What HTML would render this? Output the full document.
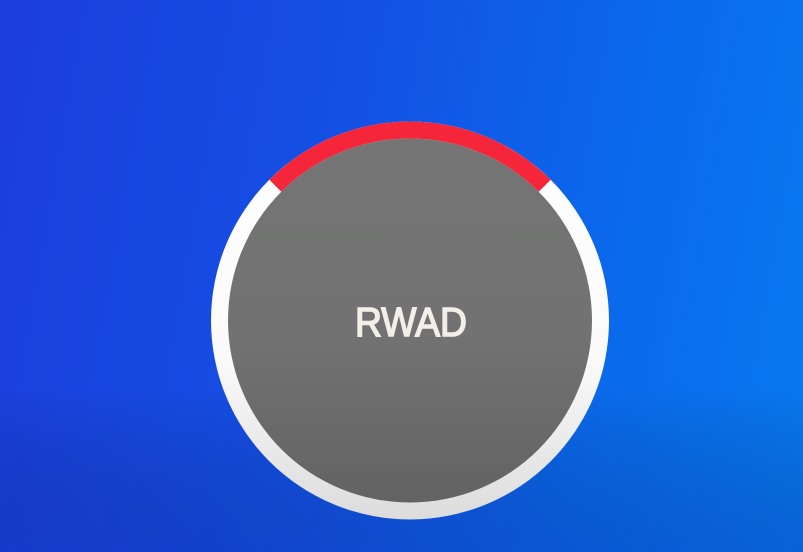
<!DOCTYPE html>
<html><head><meta charset="utf-8"><style>
html,body{margin:0;padding:0;width:803px;height:552px;overflow:hidden}
body{background:linear-gradient(100deg,#1c3ddc 0%,#1450e4 40%,#0a6aec 75%,#0879f0 100%)}
svg{position:absolute;left:0;top:0}
</style></head><body>
<svg width="803" height="552" viewBox="0 0 803 552">
<defs>
<linearGradient id="bg2" x1="0" y1="0" x2="0" y2="1">
<stop offset="0.7" stop-color="#000" stop-opacity="0"/>
<stop offset="1" stop-color="#0a1f8a" stop-opacity="0.25"/>
</linearGradient>
<linearGradient id="ring" x1="0" y1="0" x2="0" y2="1">
<stop offset="0" stop-color="#ffffff"/>
<stop offset="0.6" stop-color="#fafafa"/>
<stop offset="1" stop-color="#dcdcdc"/>
</linearGradient>
<linearGradient id="disc" x1="0" y1="0" x2="0" y2="1">
<stop offset="0" stop-color="#747574"/>
<stop offset="0.55" stop-color="#717271"/>
<stop offset="1" stop-color="#626362"/>
</linearGradient>
</defs>
<rect width="803" height="552" fill="url(#bg2)"/>
<circle cx="410" cy="320.5" r="199" fill="url(#ring)"/>
<path d="M269.3 179.8 A199 199 0 0 1 550.7 179.8 L538.7 191.8 A182 182 0 0 0 281.3 191.8 Z" fill="#f5263a"/>
<circle cx="410" cy="320.5" r="182" fill="url(#disc)"/>
<text x="355" y="336" textLength="112" lengthAdjust="spacingAndGlyphs" font-family="Liberation Sans, sans-serif" font-size="41" fill="#f4eee9" stroke="#f4eee9" stroke-width="1.5">RWAD</text>
</svg>
</body></html>
